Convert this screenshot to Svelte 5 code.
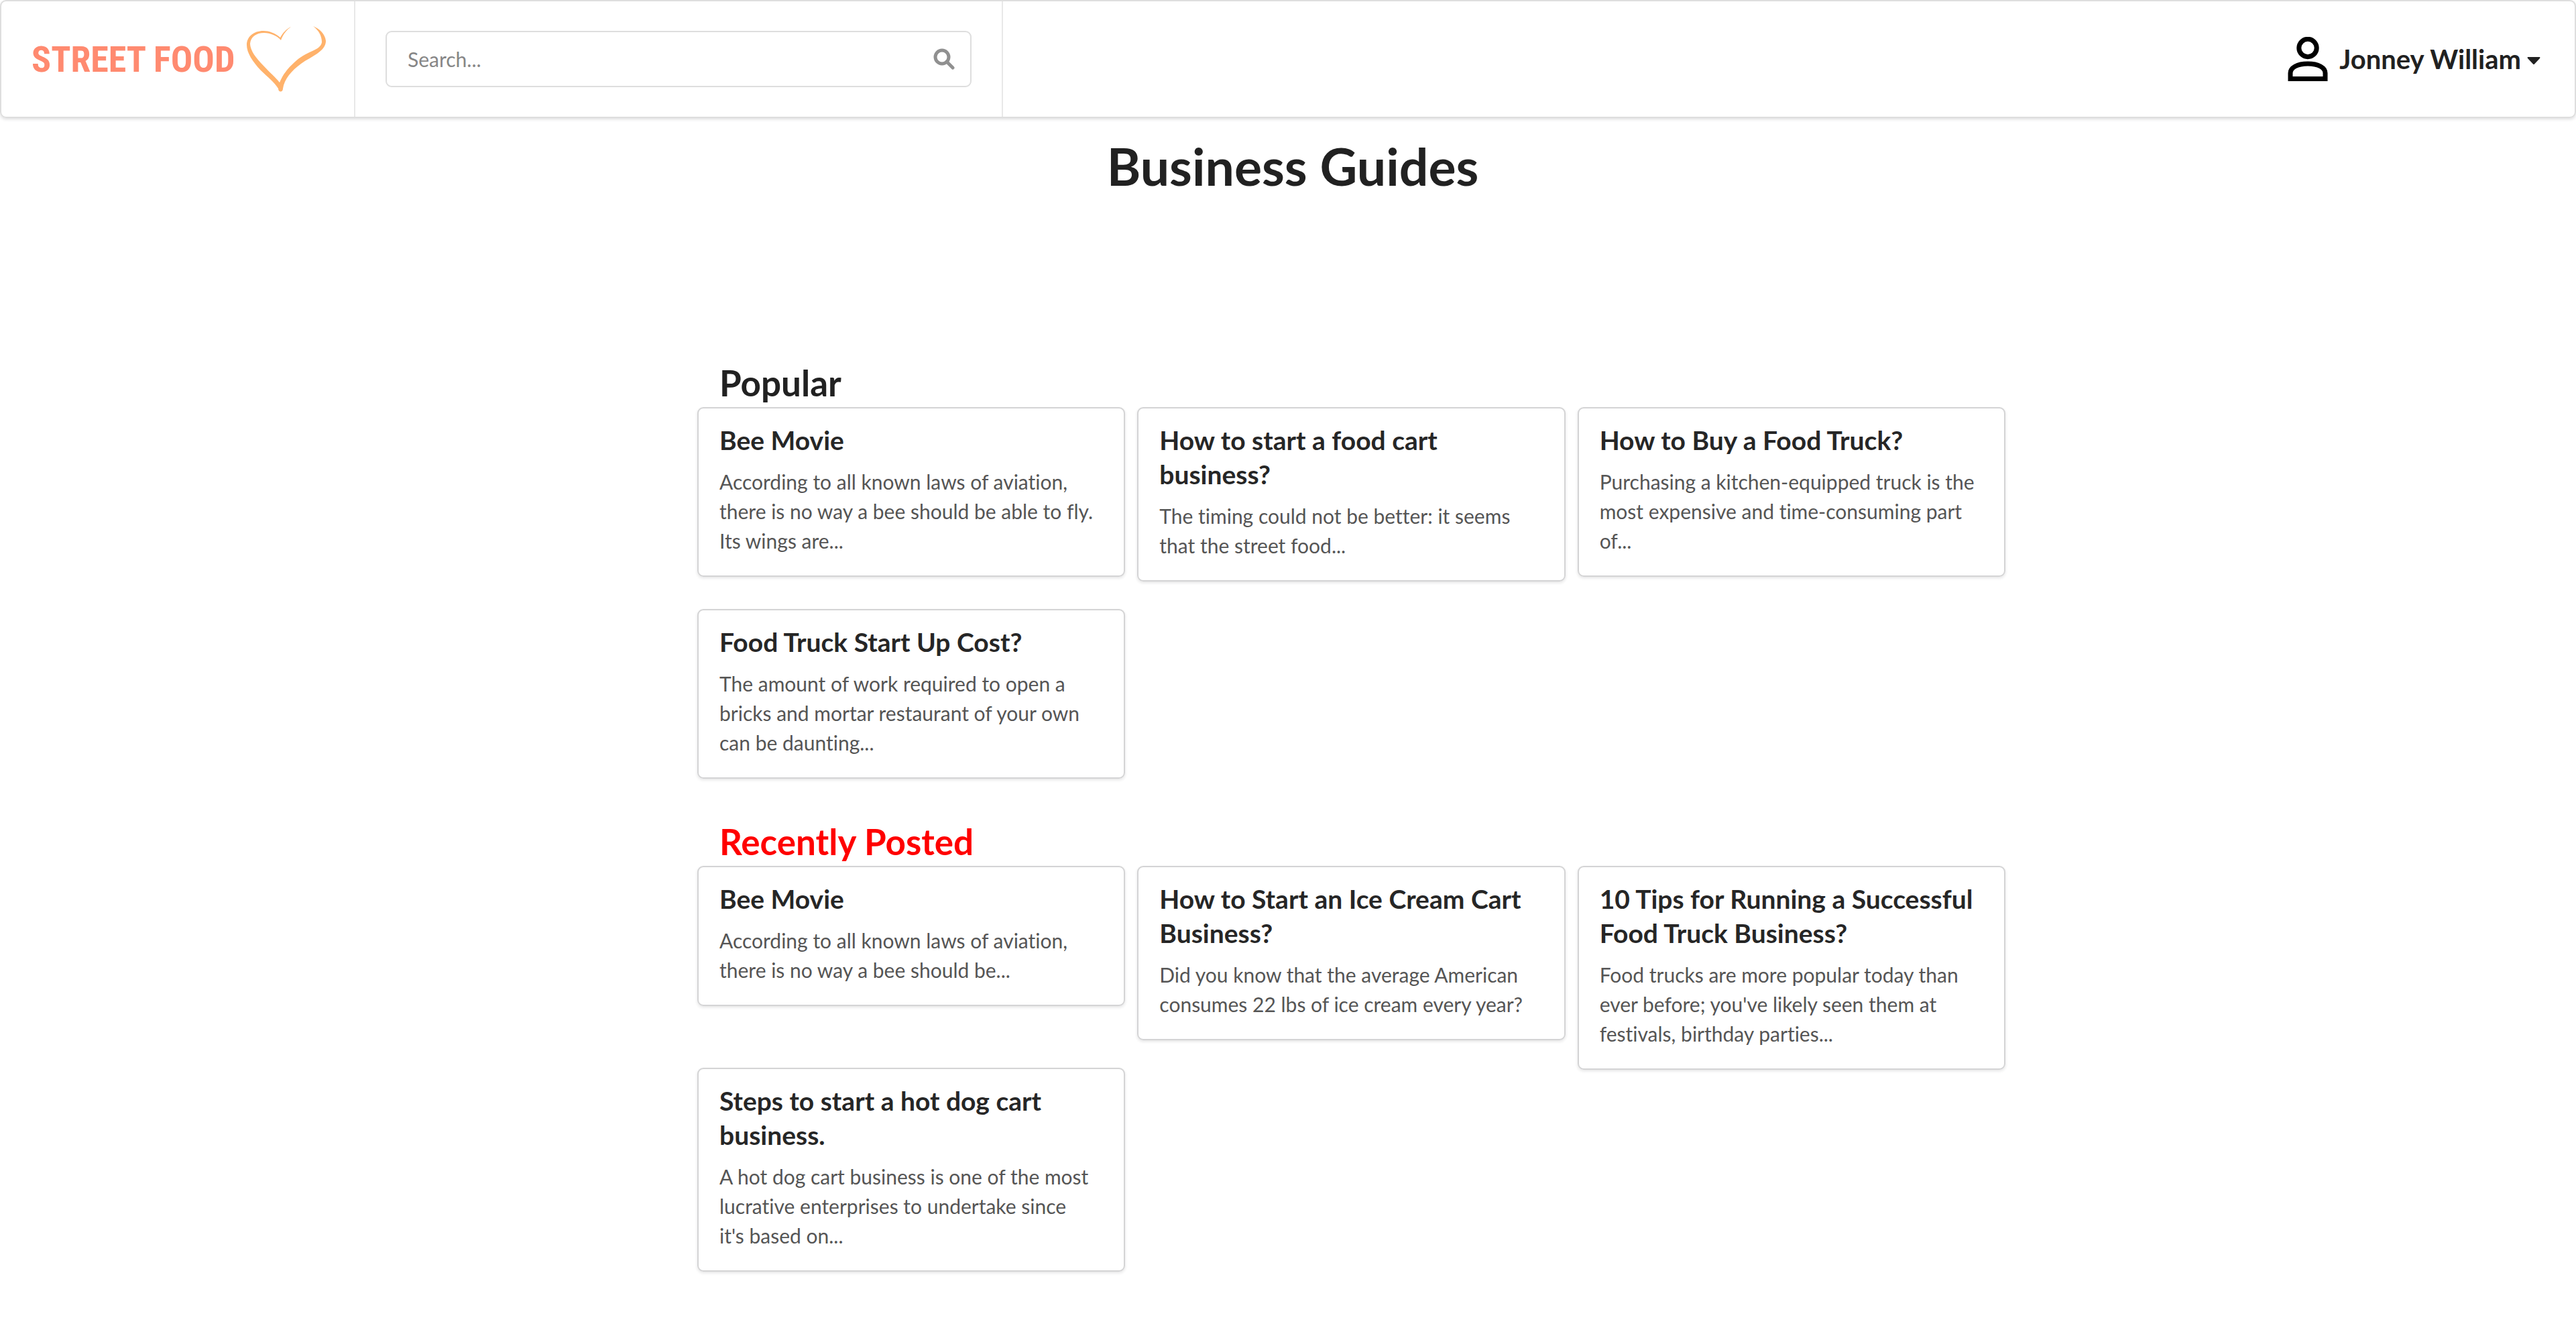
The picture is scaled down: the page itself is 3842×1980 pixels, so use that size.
<script>
  const popular = [
    { title: 'Bee Movie', text: 'According to all known laws of aviation, there is no way a bee should be able to fly. Its wings are...' },
    { title: 'How to start a food cart business?', text: 'The timing could not be better: it seems that the street food...' },
    { title: 'How to Buy a Food Truck?', text: 'Purchasing a kitchen-equipped truck is the most expensive and time-consuming part of...' },
    { title: 'Food Truck Start Up Cost?', text: 'The amount of work required to open a bricks and mortar restaurant of your own can be daunting...' }
  ];
  const recent = [
    { title: 'Bee Movie', text: 'According to all known laws of aviation, there is no way a bee should be...' },
    { title: 'How to Start an Ice Cream Cart Business?', text: 'Did you know that the average American consumes 22 lbs of ice cream every year?' },
    { title: '10 Tips for Running a Successful Food Truck Business?', text: "Food trucks are more popular today than ever before; you've likely seen them at festivals, birthday parties..." },
    { title: 'Steps to start a hot dog cart business.', text: "A hot dog cart business is one of the most lucrative enterprises to undertake since it's\u00a0based on..." }
  ];
  const sections = [
    { name: 'Popular', items: popular, fresh: false },
    { name: 'Recently Posted', items: recent, fresh: true }
  ];
</script>

<header class="menu">
  <a class="logo" href="#home" aria-label="Street Food home">
    <span class="wordmark">STREET FOOD</span>
    <svg class="heart" viewBox="0 0 118 98" aria-hidden="true">
      <path d="M66 1C59 4 53 11 50 17C42 10 33 7 25 7C10 7 0 16 0 28C0 40 9 53 21 66C31 76 41 83 47 93C47 99 54 99 54 93C56 79 67 66 81 56C89 50 98 46 105 41C112 36 118 30 118 22C117 12 109 4 99 0C107 6 112 14 112 24C111 30 105 34 98 37C89 41 79 46 71 54C61 63 54 72 49 84C43 76 34 69 25 59C14 48 5 36 5 26C6 16 14 10 26 10C35 10 45 14 51 21C54 12 60 5 66 1Z" />
    </svg>
  </a>
  <form class="search" role="search">
    <label class="field">
      <input type="text" placeholder="Search..." aria-label="Search" />
      <svg class="glass" viewBox="0 0 32 32" aria-hidden="true">
        <circle cx="13" cy="13" r="10" />
        <path d="M20 20l9 9" />
      </svg>
    </label>
  </form>
  <button class="user" type="button">
    <svg class="person" viewBox="0 0 60 66" aria-hidden="true">
      <circle cx="30" cy="16.500" r="13.200" />
      <path d="M4 62.500V54C4 46 14 40 30 40S56 46 56 54V62.500Z" />
    </svg>
    <span>Jonney William</span>
    <svg class="caret" viewBox="0 0 20 18" aria-hidden="true"><path d="M1 6H19Q20 7 19 8L11 16.500Q10 17.500 9 16.500L1 8Q0 7 1 6Z" /></svg>
  </button>
</header>

<main>
  <h1>Business Guides</h1>
  {#each sections as section}
    <section>
      <h2 class:fresh={section.fresh}>{section.name}</h2>
      <div class="cards">
        {#each section.items as item}
          <article class="card">
            <h3>{item.title}</h3>
            <p>{item.text}</p>
          </article>
        {/each}
      </div>
    </section>
  {/each}
</main>

<style>
  :global(body) {
    margin: 0;
    background: #fff;
    color: #212121;
    font-family: Lato, sans-serif;
    font-variant-ligatures: no-common-ligatures;
  }
  .menu {
    box-sizing: border-box;
    display: flex;
    height: 176px;
    border: 2px solid #dedede;
    border-radius: 9px;
    box-shadow: 0 2px 4px rgba(34, 36, 38, 0.15);
  }
  .logo {
    display: flex;
    align-items: center;
    box-sizing: border-box;
    width: 528px;
    padding: 0 42px 0 45px;
    justify-content: space-between;
    border-right: 2px solid #e8e8e8;
    color: #ff8a70;
    text-decoration: none;
  }
  .wordmark {
    font: bold 54px 'Roboto Condensed', Roboto, sans-serif;
    white-space: nowrap;
  }
  .heart {
    width: 118px;
    height: 98px;
    fill: #ffb26b;
    flex: none;
  }
  .search {
    display: flex;
    align-items: center;
    box-sizing: border-box;
    width: 966px;
    padding: 0 45px;
    border-right: 2px solid #e8e8e8;
  }
  .field {
    display: flex;
    align-items: center;
    box-sizing: border-box;
    width: 100%;
    height: 84px;
    padding: 0 23px 0 31px;
    border: 2px solid #dedede;
    border-radius: 9px;
  }
  input {
    flex: 1;
    min-width: 0;
    padding: 0;
    border: 0;
    outline: 0;
    background: none;
    font: 30px Lato, sans-serif;
  }
  input::placeholder {
    color: #868686;
  }
  .glass {
    width: 32px;
    height: 32px;
    fill: none;
    stroke: #909090;
    stroke-width: 5;
    stroke-linecap: round;
  }
  .user {
    display: flex;
    align-items: center;
    margin-left: auto;
    padding: 0 51px 0 0;
    border: 0;
    background: none;
    color: #212121;
    font: bold 40px Lato, sans-serif;
  }
  .person {
    width: 60px;
    height: 66px;
    margin-right: 17px;
    fill: none;
    stroke: #000;
    stroke-width: 7;
  }
  .caret {
    width: 20px;
    height: 18px;
    margin-left: 9px;
    fill: #212121;
  }
  h1 {
    margin: 0 0 237px;
    padding: 20px 0 0 14px;
    font-size: 77px;
    line-height: 102px;
    text-align: center;
  }
  section {
    width: 1951px;
    max-width: 100%;
    margin: 0 auto 10px;
    padding-left: 189px;
    box-sizing: content-box;
  }
  h2 {
    margin: 0;
    padding-left: 33px;
    font-size: 53px;
    line-height: 72px;
  }
  h2.fresh {
    color: #f00;
  }
  .cards {
    display: grid;
    grid-template-columns: repeat(3, 1fr);
    grid-auto-rows: 301px;
    column-gap: 18px;
    align-items: start;
  }
  .card {
    padding: 22px 31px 30px;
    border: 2px solid #d4d4d5;
    border-radius: 9px;
    box-shadow: 0 2px 4px rgba(34, 36, 38, 0.12);
  }
  h3 {
    margin: 0;
    font-size: 39px;
    line-height: 51px;
    color: #262626;
  }
  p {
    margin: 14px 0 0;
    font-size: 30px;
    line-height: 44px;
    color: #555;
  }
</style>
